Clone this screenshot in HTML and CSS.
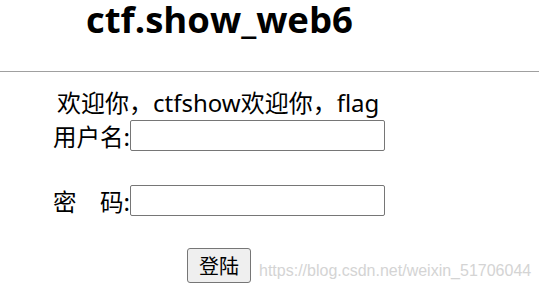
FILE: index.html
```html
<!DOCTYPE html>
<html>
<head>
<meta charset="utf-8">
<link rel="stylesheet" href="styles.css">
</head>
<body>
<div class="page">
  <div class="head">
    <h1 class="title">ctf.show_web6</h1>
  </div>
  <div class="rule"></div>
  <div class="form">
    <div class="welcome">欢迎你，ctfshow欢迎你，flag</div>
    <div class="row row-user"><span class="label">用户名:</span><span class="input"></span></div>
    <div class="row row-pass"><span class="label">密　码:</span><span class="input"></span></div>
    <div class="row row-btn"><span class="btn">登陆</span><span class="mark">https://blog.csdn.net/weixin_51706044</span></div>
  </div>
</div>
</body>
</html>
```
FILE: styles.css
```css
html, body {
  margin: 0;
  padding: 0;
  background: #ffffff;
}
.page {
  width: 539px;
  height: 297px;
  overflow: hidden;
  font-family: "Open Sans", "Noto Sans CJK SC", sans-serif;
  color: #000;
}
.head {
  height: 70px;
  padding-top: 1px;
  padding-left: 86px;
}
.title {
  margin: 0;
  padding: 0;
  font-size: 36.5px;
  line-height: 36px;
  font-weight: 700;
}
.rule {
  height: 1px;
  background: #a0a0a0;
}
.form {
  padding-left: 53px;
  font-size: 23.5px;
  font-family: "Noto Sans", "Noto Sans CJK SC", sans-serif;
}
.welcome {
  padding-left: 4px;
  margin-top: 17px;
  line-height: 28px;
  height: 28px;
  font-size: 24px;
}
.row {
  display: flex;
  align-items: center;
}
.label {
  line-height: 28px;
  font-family: "Noto Sans CJK SC", sans-serif;
}
.input {
  display: block;
  width: 253px;
  height: 29px;
  border: 1px solid #767676;
  border-radius: 2px;
  background: #fff;
}
.row-user {
  margin-top: 3px;
}
.row-pass {
  margin-top: 34px;
}
.row-btn {
  margin-top: 32px;
  padding-left: 134px;
  align-items: flex-end;
}
.btn {
  display: block;
  width: 62px;
  height: 33px;
  border: 1px solid #767676;
  border-radius: 3px;
  background: #efefef;
  text-align: center;
  line-height: 33px;
  font-size: 20px;
  font-family: "Noto Sans CJK SC", sans-serif;
}
.mark {
  margin-left: 8px;
  margin-bottom: 2px;
  font-family: "Liberation Sans", Arial, sans-serif;
  font-size: 16px;
  color: #d4d4d4;
  line-height: 20px;
}
```
